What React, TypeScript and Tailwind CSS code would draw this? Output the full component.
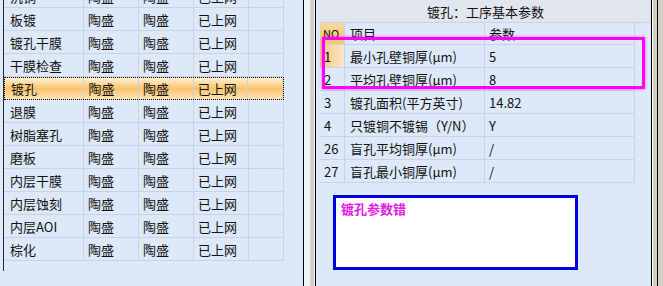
const leftRows = [
	"沉铜",
	"板镀",
	"镀孔干膜",
	"干膜检查",
	"镀孔",
	"退膜",
	"树脂塞孔",
	"磨板",
	"内层干膜",
	"内层蚀刻",
	"内层AOI",
	"棕化",
];

const params = [
	{ no: "1", name: "最小孔壁铜厚(μm)", value: "5" },
	{ no: "2", name: "平均孔壁铜厚(μm)", value: "8" },
	{ no: "3", name: "镀孔面积(平方英寸)", value: "14.82" },
	{ no: "4", name: "只镀铜不镀锡（Y/N）", value: "Y" },
	{ no: "26", name: "盲孔平均铜厚(μm)", value: "/" },
	{ no: "27", name: "盲孔最小铜厚(μm)", value: "/" },
];

function LeftPanel() {
	return (
		<div className="w-[303px] h-full bg-[#dde9f8] pl-[3px] overflow-hidden">
			<div className="h-full border-l border-[#2a2a2a]">
				<div className="-mt-[15px] w-[280px]">
					{leftRows.map((name) => {
						const selected = name === "镀孔";
						return (
							<div
								key={name}
								className={
									selected
										? "flex h-[23px] items-center border border-dotted border-black bg-gradient-to-b from-[#fff1d6] via-[#fcc46a] to-[#fde3b4]"
										: "flex h-[23px] items-center border-b border-[#c6d4e7]"
								}
							>
								<div className="w-[80px] pl-[6px] h-full flex items-center border-r border-[#c6d4e7]">{name}</div>
								<div className="w-[55px] pl-[4px] h-full flex items-center border-r border-[#c6d4e7]">陶盛</div>
								<div className="w-[55px] pl-[4px] h-full flex items-center border-r border-[#c6d4e7]">陶盛</div>
								<div className="w-[55px] pl-[4px] h-full flex items-center border-r border-[#c6d4e7]">已上网</div>
								<div className="w-[35px] h-full border-r border-[#c6d4e7]" />
							</div>
						);
					})}
				</div>
			</div>
		</div>
	);
}

function Splitter() {
	return (
		<div className="flex h-full">
			<div className="w-px bg-black" />
			<div className="w-[6px] bg-[#eef3fa]" />
			<div className="w-[4px] bg-[#d4d0c8]" />
			<div className="w-px bg-[#eef3fa]" />
			<div className="w-px bg-black" />
		</div>
	);
}

function RightPanel() {
	return (
		<div className="relative w-[335px] h-full bg-[#dde9f8] pl-[4px]">
			<div className="h-[23px] bg-[#e1e6ee] flex items-center justify-center border-b border-[#c6d4e7]">
				镀孔：工序基本参数
			</div>
			<div className="w-[315px]">
				<div className="flex h-[22px] items-center border-b border-[#c6d4e7]">
					<div className="w-[25px] h-full flex items-center pl-[3px] border-r border-[#c6d4e7] bg-gradient-to-b from-[#fbd899] to-[#f6c56f] text-[11px]">
						NO
					</div>
					<div className="w-[140px] h-full flex items-center pl-[5px] border-r border-[#c6d4e7]">项目</div>
					<div className="w-[150px] h-full flex items-center pl-[4px] border-r border-[#c6d4e7]">参数</div>
				</div>
				{params.map((p, i) => (
					<div key={p.no} className="flex h-[23px] items-center border-b border-[#c6d4e7]">
						<div
							className={
								i === 0
									? "w-[25px] h-full flex items-center pl-[4px] border-r border-[#c6d4e7] bg-gradient-to-r from-[#f8c77a] to-[#fbe6c4]"
									: "w-[25px] h-full flex items-center pl-[4px] border-r border-[#c6d4e7]"
							}
						>
							{p.no}
						</div>
						<div className="w-[140px] h-full flex items-center pl-[5px] border-r border-[#c6d4e7]">{p.name}</div>
						<div className="w-[150px] h-full flex items-center pl-[4px] border-r border-[#c6d4e7]">{p.value}</div>
					</div>
				))}
			</div>
			<div className="ml-[13px] mt-[12px] w-[245px] h-[75px] border-[3px] border-[#0000e0] bg-white px-[5px] pt-[4px] font-bold text-[#e020e0]">
				镀孔参数错
			</div>
			<div className="absolute left-[6px] top-[37px] w-[323px] h-[52px] border-[3px] border-[#ff00ff] shadow-[0_0_3px_rgba(255,0,255,0.6)]" />
		</div>
	);
}

function RightEdge() {
	return (
		<div className="flex h-full">
			<div className="w-px bg-black" />
			<div className="w-px bg-white" />
			<div className="w-[4px] bg-[#d4d0c8]" />
			<div className="w-px bg-black" />
			<div className="w-[5px] bg-[#d4d0c8]" />
		</div>
	);
}

export default function App() {
	return (
		<div
			className="flex w-[663px] h-[286px] overflow-hidden text-[13px] text-[#111] leading-none"
			style={{ fontFamily: '"Noto Sans CJK SC", "Liberation Sans", sans-serif' }}
		>
			<LeftPanel />
			<Splitter />
			<RightPanel />
			<RightEdge />
		</div>
	);
}
